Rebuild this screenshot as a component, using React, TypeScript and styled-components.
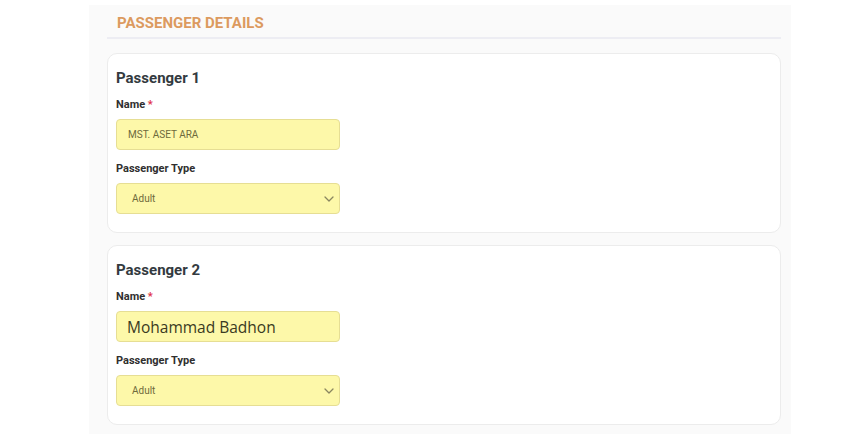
import React from "react";
import styled, { createGlobalStyle } from "styled-components";

const Global = createGlobalStyle`
  html, body { margin: 0; padding: 0; background: #ffffff; }
  body { font-family: Roboto, "Liberation Sans", Arial, sans-serif; }
`;

const Page = styled.div`
  padding-top: 5px;
  padding-left: 89px;
  width: 857px;
  box-sizing: border-box;
`;

const Panel = styled.section`
  width: 702px;
  box-sizing: border-box;
  background: #fafafa;
  padding: 0 10px 9px 18px;
  display: flex;
  flex-direction: column;
`;

const Header = styled.div`
  height: 34px;
  box-sizing: border-box;
  border-bottom: 2px solid #ededf3;
  display: flex;
  align-items: center;
  padding-left: 10px;
  padding-top: 4px;
  font-size: 15px;
  font-weight: 700;
  color: #dc9a5f;
`;

const Cards = styled.div`
  display: flex;
  flex-direction: column;
  gap: 12px;
  margin-top: 14px;
`;

const Card = styled.div`
  background: #ffffff;
  border: 1px solid #ececec;
  border-radius: 10px;
  padding: 15px 9px 18px 8px;
  display: flex;
  flex-direction: column;
`;

const Title = styled.h3`
  margin: 0 0 11px 0;
  font-size: 15px;
  line-height: 18px;
  font-weight: 700;
  color: #333a40;
`;

const Label = styled.label`
  display: block;
  font-size: 11px;
  line-height: 14px;
  font-weight: 700;
  color: #2f2f2f;
  margin-bottom: 7px;
`;

const Star = styled.span`
  color: #e0314a;
`;

const Field = styled.div<{ $last?: boolean }>`
  width: 224px;
  height: 31px;
  box-sizing: border-box;
  background: #fdf8a9;
  border: 1px solid #e6de94;
  border-radius: 4px;
  display: flex;
  align-items: center;
  margin-bottom: ${(p) => (p.$last ? "0" : "12px")};
`;

const Value = styled.span<{ $big?: boolean; $indent: number }>`
  padding-left: ${(p) => p.$indent}px;
  font-family: ${(p) => (p.$big ? `"Open Sans", "Noto Sans", sans-serif` : `Roboto, "Liberation Sans", sans-serif`)};
  font-size: ${(p) => (p.$big ? "15.5px" : "10px")};
  color: ${(p) => (p.$big ? "#3a3a22" : "#6e6a3c")};
  flex: 1;
`;

const Chevron = styled.svg`
  width: 10px;
  height: 6px;
  margin-right: 5px;
`;

type P = { n: number; name: string; big?: boolean };

const passengers: P[] = [
  { n: 1, name: "MST. ASET ARA" },
  { n: 2, name: "Mohammad Badhon", big: true },
];

export default function App() {
  return (
    <>
      <Global />
      <Page>
        <Panel>
          <Header>PASSENGER DETAILS</Header>
          <Cards>
            {passengers.map((p) => (
              <Card key={p.n}>
                <Title>Passenger {p.n}</Title>
                <Label>
                  Name <Star>*</Star>
                </Label>
                <Field>
                  <Value $big={p.big} $indent={p.big ? 10 : 11}>
                    {p.name}
                  </Value>
                </Field>
                <Label>Passenger Type</Label>
                <Field $last>
                  <Value $indent={15}>Adult</Value>
                  <Chevron viewBox="0 0 10 6">
                    <path d="M1 1 L5 5 L9 1" fill="none" stroke="#8a8660" strokeWidth="1.3" strokeLinecap="round" strokeLinejoin="round" />
                  </Chevron>
                </Field>
              </Card>
            ))}
          </Cards>
        </Panel>
      </Page>
    </>
  );
}
